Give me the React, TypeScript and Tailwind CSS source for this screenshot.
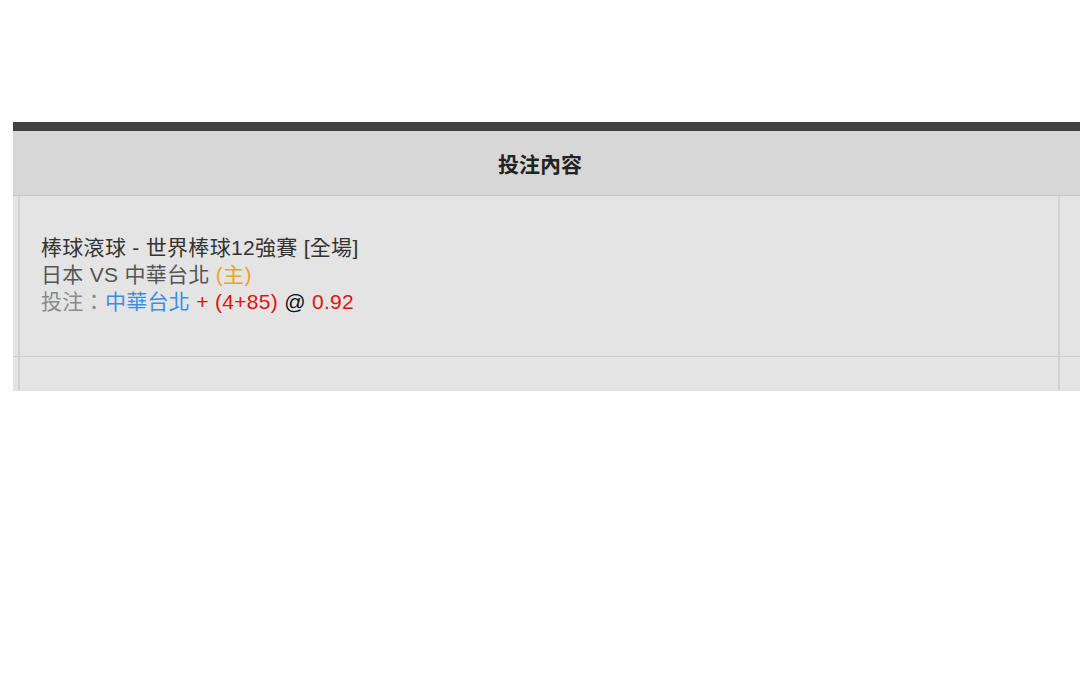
export default function App() {
  return (
    <div
      className="min-h-screen w-full overflow-hidden bg-[#fefefe] pt-[122px]"
      style={{ fontFamily: '"Liberation Sans", "Noto Sans CJK TC", sans-serif' }}
    >
      <div className="ml-[13px] w-[1100px]">
        {/* top bar */}
        <div className="h-[9px] bg-[#424242]"></div>

        {/* header */}
        <div className="flex h-[65px] items-center border-b border-[#c6c6c6] bg-[#d7d7d7] pt-[4px]">
          <div className="w-[1054px] text-center text-[21px] font-bold text-[#222]">投注內容</div>
        </div>

        {/* bet row */}
        <div className="flex h-[161px] border-b border-[#cdcdcd] bg-[#e4e4e4]">
          <div className="w-[7px] border-r-2 border-[#d2d2d2]"></div>
          <div className="flex w-[1040px] flex-col justify-center border-r-2 border-[#d2d2d2] pb-[4px] pl-[21px] text-[21px] leading-[27px] tracking-[0.3px]">
            <div className="text-[#333]">棒球滾球 - 世界棒球12強賽 [全場]</div>
            <div className="text-[#555]">
              日本 VS 中華台北 <span className="text-[#f0a030]">(主)</span>
            </div>
            <div className="text-[#8a8a8a]">
              投注：<span className="text-[#3a8ee6]">中華台北</span>{" "}
              <span className="text-[#e01010]">+ (4+85)</span>{" "}
              <span className="text-[#111]">@</span>{" "}
              <span className="text-[#e01010]">0.92</span>
            </div>
          </div>
          <div className="flex-1"></div>
        </div>

        {/* empty row */}
        <div className="flex h-[34px] bg-[#e4e4e4]">
          <div className="w-[7px] border-r-2 border-[#d2d2d2]"></div>
          <div className="w-[1040px] border-r-2 border-[#d2d2d2]"></div>
          <div className="flex-1"></div>
        </div>
      </div>
    </div>
  );
}
